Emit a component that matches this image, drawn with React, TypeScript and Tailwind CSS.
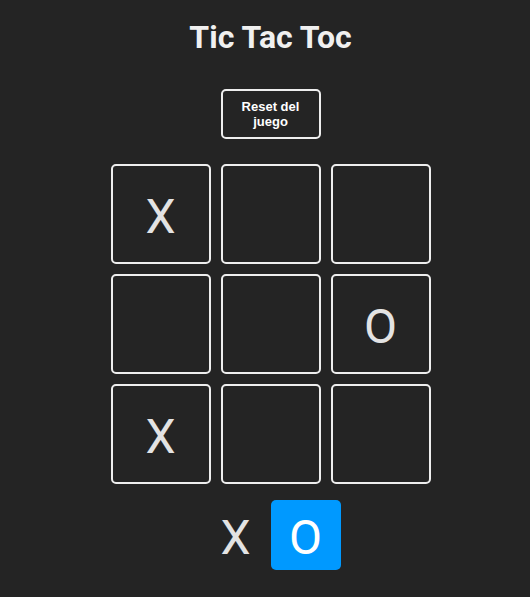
import { useState } from 'react';

type Cell = 'X' | 'O' | null;

const initialBoard: Cell[] = ['X', null, null, null, null, 'O', 'X', null, null];

function Square({ value, onClick }: { value: Cell; onClick: () => void }) {
  return (
    <div
      onClick={onClick}
      className="w-[100px] h-[100px] border-2 border-[#eeeeee] rounded-[5px] flex items-center justify-center pt-[6px] text-[48px] leading-none cursor-pointer"
    >
      {value}
    </div>
  );
}

function Turn({ label, selected }: { label: string; selected: boolean }) {
  return (
    <div
      className={`w-[70px] h-[70px] rounded-[5px] flex items-center justify-center pt-[6px] text-[48px] leading-none ${
        selected ? 'bg-[#0099ff] text-white' : ''
      }`}
    >
      {label}
    </div>
  );
}

export default function App() {
  const [board, setBoard] = useState<Cell[]>(initialBoard);
  const [turn, setTurn] = useState<'X' | 'O'>('O');

  const handleClick = (i: number) => {
    if (board[i]) return;
    const next = [...board];
    next[i] = turn;
    setBoard(next);
    setTurn(turn === 'X' ? 'O' : 'X');
  };

  const reset = () => {
    setBoard(Array(9).fill(null));
    setTurn('X');
  };

  return (
    <main className="min-h-[597px] w-full bg-[#242424] text-[#e3e3e3] font-['Roboto'] flex flex-col items-center pt-[20px] pl-[11px]">
      <h1 className="text-[32px] font-bold leading-[35px] text-[#f0f0f0]">Tic Tac Toc</h1>
      <button
        onClick={reset}
        className="mt-[34px] w-[100px] h-[50px] border-2 border-[#eeeeee] rounded-[5px] font-['Liberation_Sans'] font-bold text-[13px] leading-[15px] text-white px-4"
      >
        Reset del juego
      </button>
      <section className="mt-[25px] grid grid-cols-3 gap-[10px]">
        {board.map((v, i) => (
          <Square key={i} value={v} onClick={() => handleClick(i)} />
        ))}
      </section>
      <section className="mt-[16px] flex">
        <Turn label="X" selected={turn === 'X'} />
        <Turn label="O" selected={turn === 'O'} />
      </section>
    </main>
  );
}
